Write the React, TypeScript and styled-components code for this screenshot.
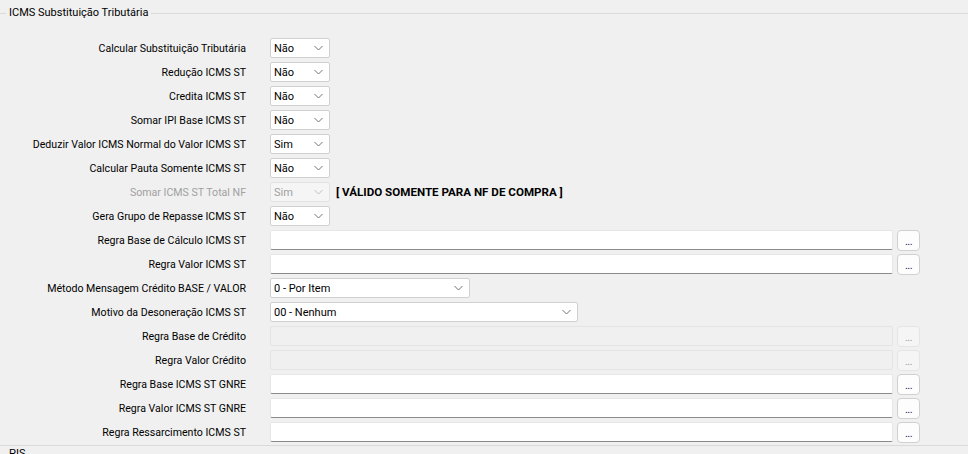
import React from 'react';
import styled, { createGlobalStyle } from 'styled-components';

const Global = createGlobalStyle`
  html, body { margin: 0; padding: 0; background: #f0f0f0; }
  body { font-family: Roboto, "Noto Sans", sans-serif; font-size: 10.6px; color: #000; }
`;

const Page = styled.div`
  width: 968px;
  height: 454px;
  overflow: hidden;
  background: #f0f0f0;
`;

const Header = styled.div`
  display: flex;
  align-items: center;
  height: 26px;
`;

const HeaderLine = styled.div<{ $grow?: boolean }>`
  height: 1px;
  background: #dadada;
  ${(p) => (p.$grow ? 'flex: 1;' : 'width: 6px;')}
`;

const HeaderText = styled.span`
  padding: 0 3px;
  line-height: 16px;
  font-size: 11px;
`;

const Form = styled.div`
  display: grid;
  grid-template-columns: 246px 1fr;
  column-gap: 24px;
  grid-auto-rows: 24px;
  align-items: center;
  padding-top: 10px;
`;

const Label = styled.div<{ $disabled?: boolean }>`
  text-align: right;
  white-space: nowrap;
  color: ${(p) => (p.$disabled ? '#a0a0a0' : '#000')};
`;

const Field = styled.div`
  display: flex;
  align-items: center;
  gap: 4px;
`;

const SelectBox = styled.div<{ $w: number; $disabled?: boolean }>`
  box-sizing: border-box;
  width: ${(p) => p.$w}px;
  height: 20px;
  display: flex;
  align-items: center;
  justify-content: space-between;
  padding: 0 6px 0 3px;
  background: ${(p) => (p.$disabled ? '#f5f5f5' : '#fff')};
  border: 1px solid ${(p) => (p.$disabled ? '#e3e3e3' : '#d0d0d0')};
  border-radius: 2px;
  color: ${(p) => (p.$disabled ? '#a0a0a0' : '#000')};
  white-space: nowrap;
  font-size: 11px;
`;

const Note = styled.span`
  font-weight: bold;
  font-size: 11.6px;
  margin-left: 2px;
  white-space: nowrap;
`;

const TextInput = styled.div<{ $disabled?: boolean }>`
  box-sizing: border-box;
  width: 623px;
  height: 20px;
  background: ${(p) => (p.$disabled ? '#f0f0f0' : '#fff')};
  border: 1px solid ${(p) => (p.$disabled ? '#e4e4e4' : '#e6e6e6')};
  border-bottom-color: ${(p) => (p.$disabled ? '#e4e4e4' : '#8a8a8a')};
  border-radius: 2px;
`;

const DotsButton = styled.div<{ $disabled?: boolean }>`
  box-sizing: border-box;
  width: 23px;
  height: 21px;
  display: flex;
  align-items: flex-end;
  justify-content: center;
  padding-bottom: 3px;
  background: ${(p) => (p.$disabled ? '#f5f5f5' : '#fdfdfd')};
  border: 1px solid ${(p) => (p.$disabled ? '#e5e5e5' : '#d0d0d0')};
  border-radius: 4px;
  color: ${(p) => (p.$disabled ? '#a0a0a0' : '#1a1a5a')};
  font-size: 11px;
  line-height: 10px;
  letter-spacing: -0.5px;
`;

const Footer = styled.div`
  margin-top: 1px;
  border-top: 1px solid #dadada;
  padding-left: 9px;
  line-height: 16px;
  font-size: 11px;
`;

const Chevron = ({ disabled }: { disabled?: boolean }) => (
  <svg width="9" height="6" viewBox="0 0 9 6">
    <path d="M0.5 1 L4.5 5 L8.5 1" fill="none" stroke={disabled ? '#c0c0c0' : '#707070'} strokeWidth="1" />
  </svg>
);

const Select = ({ value, w = 60, disabled }: { value: string; w?: number; disabled?: boolean }) => (
  <SelectBox $w={w} $disabled={disabled}>
    <span>{value}</span>
    <Chevron disabled={disabled} />
  </SelectBox>
);

const Lookup = ({ disabled }: { disabled?: boolean }) => (
  <Field>
    <TextInput $disabled={disabled} />
    <DotsButton $disabled={disabled}>...</DotsButton>
  </Field>
);

type Row =
  | { label: string; kind: 'select'; value: string; w?: number; disabled?: boolean; note?: string }
  | { label: string; kind: 'lookup'; disabled?: boolean };

const rows: Row[] = [
  { label: 'Calcular Substituição Tributária', kind: 'select', value: 'Não' },
  { label: 'Redução ICMS ST', kind: 'select', value: 'Não' },
  { label: 'Credita ICMS ST', kind: 'select', value: 'Não' },
  { label: 'Somar IPI Base ICMS ST', kind: 'select', value: 'Não' },
  { label: 'Deduzir Valor ICMS Normal do Valor ICMS ST', kind: 'select', value: 'Sim' },
  { label: 'Calcular Pauta Somente ICMS ST', kind: 'select', value: 'Não' },
  { label: 'Somar ICMS ST Total NF', kind: 'select', value: 'Sim', disabled: true, note: '[ VÁLIDO SOMENTE PARA NF DE COMPRA ]' },
  { label: 'Gera Grupo de Repasse ICMS ST', kind: 'select', value: 'Não' },
  { label: 'Regra Base de Cálculo ICMS ST', kind: 'lookup' },
  { label: 'Regra Valor ICMS ST', kind: 'lookup' },
  { label: 'Método Mensagem Crédito BASE / VALOR', kind: 'select', value: '0 - Por Item', w: 200 },
  { label: 'Motivo da Desoneração ICMS ST', kind: 'select', value: '00 - Nenhum', w: 308 },
  { label: 'Regra Base de Crédito', kind: 'lookup', disabled: true },
  { label: 'Regra Valor Crédito', kind: 'lookup', disabled: true },
  { label: 'Regra Base ICMS ST GNRE', kind: 'lookup' },
  { label: 'Regra Valor ICMS ST GNRE', kind: 'lookup' },
  { label: 'Regra Ressarcimento ICMS ST', kind: 'lookup' },
];

export default function App() {
  return (
    <Page>
      <Global />
      <Header>
        <HeaderLine />
        <HeaderText>ICMS Substituição Tributária</HeaderText>
        <HeaderLine $grow />
      </Header>
      <Form>
        {rows.map((r) => (
          <React.Fragment key={r.label}>
            <Label $disabled={r.kind === 'select' && r.disabled}>{r.label}</Label>
            {r.kind === 'select' ? (
              <Field>
                <Select value={r.value} w={r.w} disabled={r.disabled} />
                {r.note && <Note>{r.note}</Note>}
              </Field>
            ) : (
              <Lookup disabled={r.disabled} />
            )}
          </React.Fragment>
        ))}
      </Form>
      <Footer>PIS</Footer>
    </Page>
  );
}
